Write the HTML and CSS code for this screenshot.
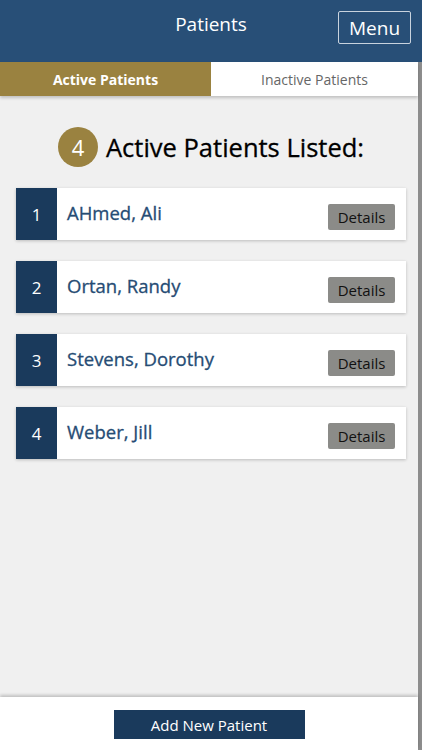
FILE: index.html
```html
<!DOCTYPE html>
<html lang="en">
<head>
    <meta charset="UTF-8">
    <title>Patients</title>
    <link rel="stylesheet" href="styles.css">
</head>
<body>
    <div class="app">
        <!-- top bar -->
        <header class="topbar">
            <h1>Patients</h1>
            <button class="menu-btn">Menu</button>
        </header>

        <div class="frame">
            <!-- tabs -->
            <nav class="tabs">
                <div class="tab active">Active Patients</div>
                <div class="tab">Inactive Patients</div>
            </nav>

            <main class="content">
                <h2 class="count">
                    <span class="count-badge">4</span>
                    Active Patients Listed:
                </h2>

                <ul class="patients">
                    <li class="patient">
                        <span class="num">1</span>
                        <span class="name">AHmed, Ali</span>
                        <button class="details">Details</button>
                    </li>
                    <li class="patient">
                        <span class="num">2</span>
                        <span class="name">Ortan, Randy</span>
                        <button class="details">Details</button>
                    </li>
                    <li class="patient">
                        <span class="num">3</span>
                        <span class="name">Stevens, Dorothy</span>
                        <button class="details">Details</button>
                    </li>
                    <li class="patient">
                        <span class="num">4</span>
                        <span class="name">Weber, Jill</span>
                        <button class="details">Details</button>
                    </li>
                </ul>
            </main>

            <footer class="footer">
                <button class="add-btn">Add New Patient</button>
            </footer>
        </div>
    </div>
</body>
</html>
```

FILE: styles.css
```css
* {
    box-sizing: border-box;
}
body {
    margin: 0;
    font-family: "Open Sans", "Noto Sans", sans-serif;
    background: #f0f0f0;
    color: #222;
}
button {
    font-family: inherit;
    cursor: pointer;
}
.app {
    display: flex;
    flex-direction: column;
    height: 100vh;
}
.topbar {
    height: 62px;
    background: #284f77;
    display: flex;
    align-items: center;
    justify-content: center;
    position: relative;
}
.topbar h1 {
    margin: 0 0 14px;
    font-size: 19px;
    font-weight: 400;
    color: #fff;
}
.menu-btn {
    position: absolute;
    right: 11px;
    top: 11px;
    width: 73px;
    height: 33px;
    background: transparent;
    border: 1px solid #c9d3de;
    border-radius: 2px;
    color: #fff;
    font-size: 19px;
    padding: 0;
}
.frame {
    flex: 1;
    display: flex;
    flex-direction: column;
    border-right: 4px solid #8d8d8d;
}
.tabs {
    display: flex;
    height: 34px;
    box-shadow: 0 2px 3px rgba(0,0,0,0.2);
    position: relative;
}
.tab {
    flex: 1;
    display: flex;
    align-items: center;
    justify-content: center;
    background: #fff;
    color: #666;
    font-size: 14px;
}
.tab.active {
    flex: 0 0 211px;
    background: #9a8240;
    color: #fff;
    font-weight: 700;
}
.content {
    flex: 1;
    padding: 31px 12px 0 16px;
}
.count {
    margin: 0 0 21px;
    display: flex;
    align-items: center;
    justify-content: center;
    gap: 8px;
    font-size: 25.5px;
    font-weight: 400;
    color: #000;
    -webkit-text-stroke: 0.3px #000;
}
.count-badge {
    width: 40px;
    height: 40px;
    border-radius: 50%;
    background: #9a8240;
    color: #fff;
    display: flex;
    align-items: center;
    justify-content: center;
    font-size: 22px;
    -webkit-text-stroke: 0;
}
.patients {
    list-style: none;
    margin: 0;
    padding: 0;
    display: flex;
    flex-direction: column;
    gap: 21px;
}
.patient {
    height: 52px;
    background: #fff;
    display: flex;
    align-items: center;
    box-shadow: 0 1px 3px rgba(0,0,0,0.22);
}
.num {
    width: 41px;
    height: 100%;
    background: #1a3a5c;
    color: #fff;
    display: flex;
    align-items: center;
    justify-content: center;
    font-size: 17px;
}
.name {
    flex: 1;
    padding-left: 10px;
    margin-bottom: 4px;
    font-size: 18.5px;
    color: #264c74;
    -webkit-text-stroke: 0.3px #264c74;
}
.details {
    margin: 6px 11px 0 0;
    width: 67px;
    height: 26px;
    padding: 0;
    border: none;
    border-radius: 2px;
    background: #8b8b88;
    color: #111;
    font-size: 15px;
}
.footer {
    height: 53px;
    background: #fff;
    display: flex;
    align-items: center;
    justify-content: center;
    box-shadow: 0 -2px 3px rgba(0,0,0,0.2);
    position: relative;
}
.add-btn {
    width: 191px;
    height: 29px;
    margin-top: 2px;
    border: none;
    background: #1a3a5c;
    color: #fff;
    font-size: 15px;
}
```
